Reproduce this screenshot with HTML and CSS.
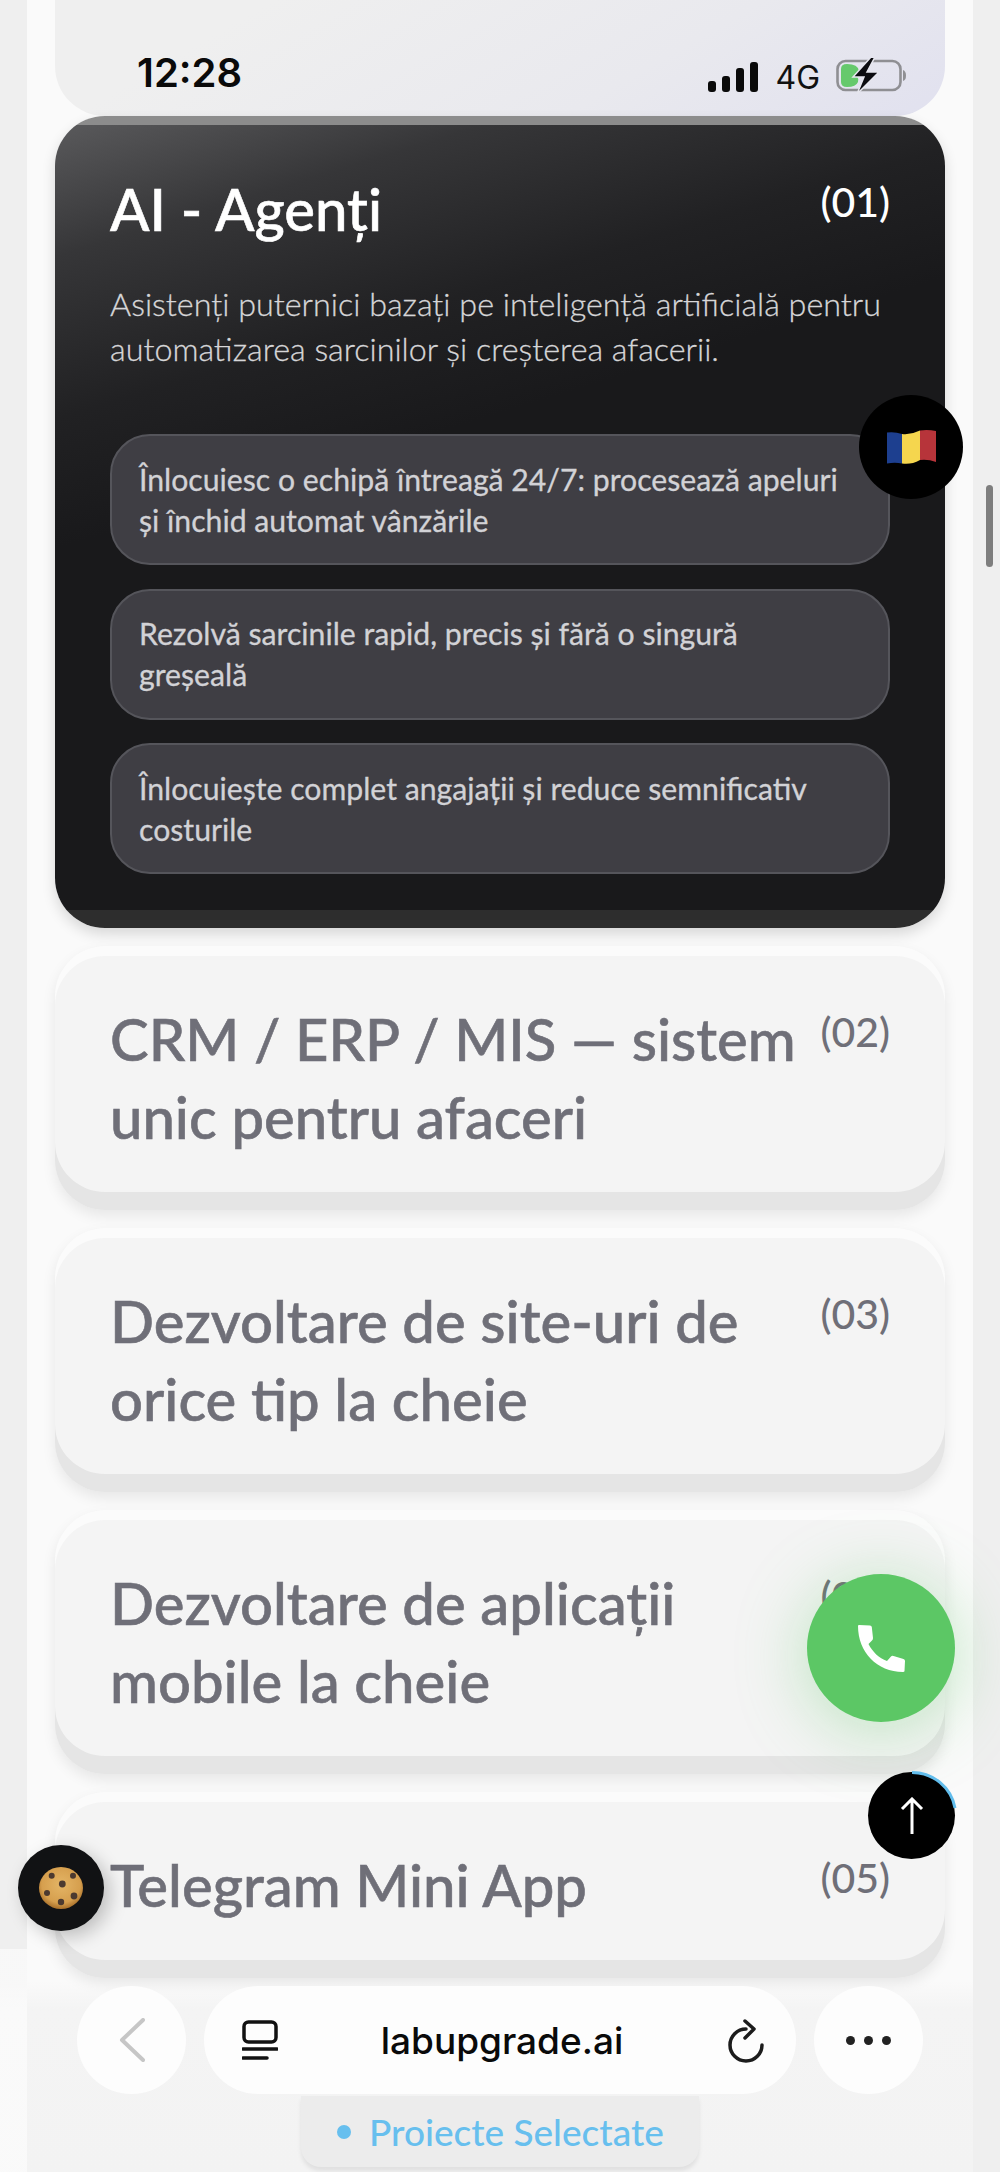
FILE: index.html
```html
<!DOCTYPE html>
<html lang="ro">
<head>
    <meta charset="UTF-8">
    <meta name="viewport" content="width=device-width, initial-scale=1.0">
    <title>labupgrade.ai</title>
    <link rel="stylesheet" href="styles.css">
</head>
<body>
    <div class="page">
        <header class="status-card">
            <span class="clock">12:28</span>
            <div class="status-icons">
                <div class="signal"><i class="bar-1"></i><i class="bar-2"></i><i class="bar-3"></i><i class="bar-4"></i></div>
                <span class="network">4G</span>
                <svg class="battery" width="71" height="36" viewBox="0 0 71 36">
                    <rect x="1.5" y="3" width="63" height="29" rx="8" fill="none" stroke="#8f8f93" stroke-width="2.6"/>
                    <path d="M67 12 Q70 13 70 17.500 Q70 22 67 23 Z" fill="#8f8f93"/>
                    <path d="M5 11 Q5 6 11 6 Q22 6 23 13 Q23 16 21 18 Q23 21 22 24 Q20 29 11 29 Q5 29 5 24 Z" fill="#66c96c"/>
                    <path d="M35 -1 L17 19 L28 19 L21 36 L43 14 L31 14 L39 -1 Z" fill="#0c0c10" stroke="#e6e6ee" stroke-width="1.500"/>
                </svg>
            </div>
        </header>

        <section class="card card-dark">
            <div class="card-head">
                <h2 class="card-title">AI - Agenți</h2>
                <span class="card-num">(01)</span>
            </div>
            <p class="card-desc">Asistenți puternici bazați pe inteligență artificială pentru automatizarea sarcinilor și creșterea afacerii.</p>
            <ul class="feature-list">
                <li class="feature">Înlocuiesc o echipă întreagă 24/7: procesează apeluri și închid automat vânzările</li>
                <li class="feature">Rezolvă sarcinile rapid, precis și fără o singură greșeală</li>
                <li class="feature">Înlocuiește complet angajații și reduce semnificativ costurile</li>
            </ul>
        </section>

        <section class="card">
            <div class="card-head">
                <h2 class="card-title">CRM / ERP / MIS — sistem unic pentru afaceri</h2>
                <span class="card-num">(02)</span>
            </div>
        </section>

        <section class="card">
            <div class="card-head">
                <h2 class="card-title">Dezvoltare de site-uri de orice tip la cheie</h2>
                <span class="card-num">(03)</span>
            </div>
        </section>

        <section class="card">
            <div class="card-head">
                <h2 class="card-title">Dezvoltare de aplicații mobile la cheie</h2>
                <span class="card-num">(04)</span>
            </div>
        </section>

        <section class="card">
            <div class="card-head">
                <h2 class="card-title">Telegram Mini App</h2>
                <span class="card-num">(05)</span>
            </div>
        </section>
    </div>

    <div class="scrollbar"></div>

    <!-- floating buttons -->
    <button class="float-btn lang-btn">
        <svg width="49" height="34" viewBox="0 0 49 34">
            <path d="M0 2.500 Q8 1.500 15 4 L15 33.500 Q8 32 0 33.500 Z" fill="#1d3f8f"/>
            <path d="M15 4 Q24 5 33 0.500 L33 30 Q24 35 15 33.500 Z" fill="#f5d64e"/>
            <path d="M33 0.500 Q41 -0.500 49 1 L49 32 Q41 29 33 30 Z" fill="#b7343a"/>
        </svg>
    </button>

    <button class="float-btn call-btn">
        <svg width="48" height="48" viewBox="0 0 48 48">
            <path d="M1 2 Q1 1 2 1 L13 1.500 Q14.500 1.500 14.800 3 L16 14 Q16 15.500 15 16.500 L11.500 20 C15.500 28 22 34 30 37 L34 32.500 Q35 31.500 36.500 32 L46.500 35 Q48 35.500 48 37 L47.500 47 Q47.500 48 46 48 C20 48 1 28 1 2 Z" fill="#fff"/>
        </svg>
    </button>

    <button class="float-btn up-btn">
        <svg class="up-ring" width="92" height="92" viewBox="0 0 92 92">
            <path d="M46 2.500 A43.500 43.500 0 0 1 89 38" fill="none" stroke="#62bdec" stroke-width="3"/>
        </svg>
        <svg width="24" height="38" viewBox="0 0 24 38">
            <path d="M12 37 V2 M2 12 L12 2 L22 12" fill="none" stroke="#fff" stroke-width="3"/>
        </svg>
    </button>

    <button class="float-btn cookie-btn">
        <svg width="44" height="42" viewBox="0 0 44 42">
            <defs>
                <radialGradient id="dough" cx="50%" cy="42%" r="58%">
                    <stop offset="0" stop-color="#e4b566"/>
                    <stop offset="0.75" stop-color="#d69f4e"/>
                    <stop offset="1" stop-color="#a86f2a"/>
                </radialGradient>
            </defs>
            <ellipse cx="22" cy="21" rx="22" ry="21" fill="url(#dough)"/>
            <g fill="#4c3a30">
                <circle cx="12.700" cy="8.700" r="3"/>
                <circle cx="34" cy="8.700" r="3"/>
                <circle cx="23.300" cy="17" r="3.400"/>
                <circle cx="8" cy="26" r="3"/>
                <circle cx="35" cy="29" r="3.400"/>
                <circle cx="22" cy="35" r="3.200"/>
            </g>
        </svg>
    </button>

    <!-- browser chrome -->
    <div class="chrome-fade"></div>
    <nav class="browser-bar">
        <div class="round-btn">
            <svg width="26" height="44" viewBox="0 0 26 44">
                <path d="M24 2 L3 22 L24 42" fill="none" stroke="#c6c6c6" stroke-width="4" stroke-linecap="round" stroke-linejoin="round"/>
            </svg>
        </div>
        <div class="url-pill">
            <svg width="36" height="40" viewBox="0 0 36 40">
                <rect x="2" y="2" width="32" height="20" rx="4.500" fill="none" stroke="#111" stroke-width="3.500"/>
                <path d="M1 29 H35 M1 38 H25" fill="none" stroke="#111" stroke-width="3.500" stroke-linecap="round"/>
            </svg>
            <span class="url-text">labupgrade.ai</span>
            <svg width="40" height="46" viewBox="0 0 40 46">
                <path d="M20 12 A16 16 0 1 0 36 28" fill="none" stroke="#1c1c1c" stroke-width="3.500" stroke-linecap="round"/>
                <path d="M19 4 L28 12 L19 21" fill="none" stroke="#1c1c1c" stroke-width="3.500" stroke-linecap="round" stroke-linejoin="round"/>
            </svg>
        </div>
        <div class="round-btn">
            <div class="dots"><i></i><i></i><i></i></div>
        </div>
    </nav>

    <div class="section-tag"><i class="tag-dot"></i>Proiecte Selectate</div>
</body>
</html>
```

FILE: styles.css
```css
* {
    box-sizing: border-box;
}
html, body {
    height: 100%;
}
body {
    margin: 0;
    font-family: "Lato", "Noto Sans", sans-serif;
    background-color: #efefef;
    overflow: hidden;
    position: relative;
}
.page {
    margin: 0 27px;
    padding: 0 28px;
    height: 2172px;
    background-color: #fafafa;
    display: flex;
    flex-direction: column;
    gap: 18px;
}

/* status bar */
.status-card {
    height: 116px;
    margin-bottom: -18px;
    padding: 0 38px 24px 82px;
    border-radius: 0 0 50px 50px;
    background: linear-gradient(150deg, #efefef 20%, #e9e9ee 65%, #e1e1ef 100%);
    display: flex;
    align-items: flex-end;
    justify-content: space-between;
    flex-shrink: 0;
}
.clock {
    font-family: "Inter", sans-serif;
    font-size: 40px;
    font-weight: 600;
    line-height: 38px;
    color: #0a0a0a;
}
.status-icons {
    display: flex;
    align-items: flex-end;
    gap: 17px;
}
.signal {
    display: flex;
    align-items: flex-end;
    gap: 6px;
    height: 30px;
}
.signal i {
    width: 8px;
    background-color: #0a0a0a;
    border-radius: 3px;
}
.bar-1 { height: 11px; }
.bar-2 { height: 16px; }
.bar-3 { height: 24px; }
.bar-4 { height: 30px; }
.network {
    font-family: "Inter", sans-serif;
    font-size: 32px;
    line-height: 28px;
    color: #111;
}
.battery {
    margin-bottom: -2px;
    margin-left: -1px;
}

/* cards */
.card {
    flex-shrink: 0;
    padding: 54px 55px;
    border-radius: 50px;
    background-color: #f4f4f4;
    box-shadow: inset 0 10px 0 #fbfbfb, inset 0 -18px 0 #e5e5e5, 0 6px 14px rgba(0, 0, 0, 0.08);
}
.card-dark {
    background:
        linear-gradient(#8c8c8c, #8c8c8c) top / 100% 9px no-repeat,
        linear-gradient(#2d2d2d, #2d2d2d) bottom / 100% 18px no-repeat,
        linear-gradient(163deg, #5c5c5e 0, #363638 13%, #212123 28%, #19191b 40%);
    box-shadow: 0 6px 14px rgba(0, 0, 0, 0.14);
}
.card-head {
    display: flex;
    justify-content: space-between;
    gap: 20px;
}
.card-title {
    margin: 0;
    font-size: 58px;
    font-weight: 500;
    line-height: 78px;
    color: #6f6f78;
    -webkit-text-stroke: 0.6px currentColor;
}
.card-num {
    margin-top: 10px;
    font-size: 41px;
    font-weight: 500;
    line-height: 44px;
    color: #6f6f78;
    white-space: nowrap;
}
.card-dark .card-title,
.card-dark .card-num {
    color: #fff;
}
.card-desc {
    margin: 33px 0 63px;
    font-size: 32.3px;
    font-weight: 300;
    line-height: 45px;
    color: #d6d6d8;
    -webkit-text-stroke: 0.3px currentColor;
}
.feature-list {
    margin: 0;
    padding: 0;
    list-style: none;
    display: flex;
    flex-direction: column;
    gap: 23.5px;
}
.feature {
    padding: 22.5px 46px 22.5px 27px;
    border: 2px solid #55555b;
    border-radius: 40px;
    background-color: #3f3e44;
    font-size: 30.2px;
    line-height: 41px;
    color: #d2d2d6;
    -webkit-text-stroke: 0.3px currentColor;
}

/* floating buttons */
.float-btn {
    position: absolute;
    padding: 0;
    border: none;
    border-radius: 50%;
    display: flex;
    align-items: center;
    justify-content: center;
}
.lang-btn {
    left: 859px;
    top: 395px;
    width: 104px;
    height: 104px;
    background-color: #000;
}
.call-btn {
    left: 807px;
    top: 1574px;
    width: 148px;
    height: 148px;
    background-color: #5cc765;
    box-shadow: 0 8px 70px rgba(92, 199, 101, 0.38);
}
.up-btn {
    left: 868px;
    top: 1772px;
    width: 87px;
    height: 87px;
    background-color: #000;
}
.up-ring {
    position: absolute;
    left: -2.5px;
    top: -2.5px;
}
.cookie-btn {
    left: 18px;
    top: 1845px;
    width: 86px;
    height: 86px;
    background-color: #111214;
    box-shadow: 6px 6px 18px rgba(0, 0, 0, 0.22);
}
.scrollbar {
    position: absolute;
    left: 986px;
    top: 485px;
    width: 7px;
    height: 82px;
    border-radius: 4px;
    background-color: #7e7e7e;
}

/* browser chrome */
.chrome-fade {
    position: absolute;
    left: 0;
    top: 1949px;
    width: 973px;
    height: 223px;
    background:
        linear-gradient(rgba(255, 255, 255, 0.55), rgba(255, 255, 255, 0.55)) left / 27px 100% no-repeat,
        linear-gradient(to bottom, transparent 32px, #f4f4f4 60px, #f3f3f3 100%);
}
.browser-bar {
    position: absolute;
    left: 77px;
    top: 1986px;
    width: 846px;
    height: 108px;
    display: flex;
    gap: 18px;
}
.round-btn {
    width: 109px;
    height: 108px;
    border-radius: 50%;
    background-color: #fdfdfd;
    display: flex;
    align-items: center;
    justify-content: center;
    flex-shrink: 0;
}
.url-pill {
    flex: 1;
    padding: 0 30px 0 38px;
    border-radius: 54px;
    background-color: #fdfdfd;
    display: flex;
    align-items: center;
    justify-content: space-between;
}
.url-text {
    font-family: "Inter", sans-serif;
    font-size: 37px;
    font-weight: 500;
    color: #0a0a0a;
}
.dots {
    display: flex;
    gap: 9px;
}
.dots i {
    width: 9px;
    height: 9px;
    border-radius: 50%;
    background-color: #222;
}
.section-tag {
    position: absolute;
    left: 301px;
    top: 2096px;
    width: 398px;
    height: 71px;
    padding-left: 36px;
    border-radius: 0 0 20px 20px;
    background-color: #ececec;
    box-shadow: 0 4px 4px rgba(0, 0, 0, 0.08);
    display: flex;
    align-items: center;
    gap: 18px;
    font-size: 37px;
    font-weight: 500;
    color: #67bfee;
}
.tag-dot {
    width: 14px;
    height: 14px;
    border-radius: 50%;
    background-color: #67bfee;
}
```
